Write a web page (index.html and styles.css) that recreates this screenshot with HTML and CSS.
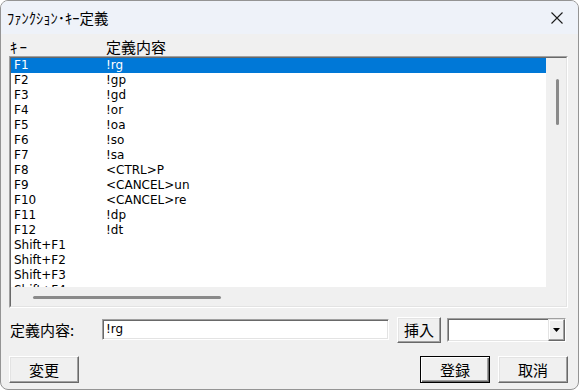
FILE: index.html
```html
<!DOCTYPE html>
<html lang="ja">
<head>
  <meta charset="UTF-8" />
  <title>ﾌｧﾝｸｼｮﾝ･ｷｰ定義</title>
  <link rel="stylesheet" href="styles.css">
</head>
<body>
  <div class="window">
    <div class="titlebar">
      <span class="title">ﾌｧﾝｸｼｮﾝ･ｷｰ定義</span>
      <div class="close">
        <svg width="12" height="12" viewBox="0 0 12 12">
          <path d="M0.5 0.5 L11.5 11.5 M11.5 0.5 L0.5 11.5" stroke="#1b1b1b" stroke-width="1.1" fill="none" />
        </svg>
      </div>
    </div>

    <div class="content">
      <div class="list-head">
        <span class="col-key">ｷｰ</span>
        <span class="col-def">定義内容</span>
      </div>

      <div class="listbox">
        <div class="list-inner">
          <div class="rows">
            <div class="row selected"><span class="key">F1</span><span>!rg</span></div>
            <div class="row"><span class="key">F2</span><span>!gp</span></div>
            <div class="row"><span class="key">F3</span><span>!gd</span></div>
            <div class="row"><span class="key">F4</span><span>!or</span></div>
            <div class="row"><span class="key">F5</span><span>!oa</span></div>
            <div class="row"><span class="key">F6</span><span>!so</span></div>
            <div class="row"><span class="key">F7</span><span>!sa</span></div>
            <div class="row"><span class="key">F8</span><span>&lt;CTRL&gt;P</span></div>
            <div class="row"><span class="key">F9</span><span>&lt;CANCEL&gt;un</span></div>
            <div class="row"><span class="key">F10</span><span>&lt;CANCEL&gt;re</span></div>
            <div class="row"><span class="key">F11</span><span>!dp</span></div>
            <div class="row"><span class="key">F12</span><span>!dt</span></div>
            <div class="row"><span class="key">Shift+F1</span><span></span></div>
            <div class="row"><span class="key">Shift+F2</span><span></span></div>
            <div class="row"><span class="key">Shift+F3</span><span></span></div>
            <div class="row"><span class="key">Shift+F4</span><span></span></div>
          </div>
          <div class="vscroll"><div class="vthumb"></div></div>
          <div class="hscroll"><div class="hthumb"></div></div>
          <div class="corner"></div>
        </div>
      </div>

      <div class="edit-row">
        <span class="edit-label">定義内容:</span>
        <div class="text-input">!rg</div>
        <button class="btn insert-btn">挿入</button>
        <div class="combo">
          <div class="combo-value"></div>
          <div class="combo-drop">
            <svg width="7" height="4" viewBox="0 0 7 4"><path d="M0 0 H7 L3.5 4 Z" fill="#000" /></svg>
          </div>
        </div>
      </div>

      <div class="button-row">
        <button class="btn">変更</button>
        <button class="btn default spacer">登録</button>
        <button class="btn">取消</button>
      </div>
    </div>
  </div>
</body>
</html>
```

FILE: styles.css
```css
/* dialog frame */
body {
  margin: 0;
  background: #fff;
  font-family: "DejaVu Sans", "Noto Sans CJK JP", sans-serif;
  font-size: 12px;
  color: #000;
}
.window {
  width: 579px;
  height: 390px;
  box-sizing: border-box;
  border: 1px solid #949494;
  border-radius: 8px;
  background: #f0f0f0;
  overflow: hidden;
}
.titlebar {
  height: 33px;
  background: #eef2f9;
  display: flex;
  align-items: center;
  padding-left: 6px;
}
.title {
  font-family: "Noto Sans CJK JP", sans-serif;
  font-size: 14.5px;
}
.close {
  margin-left: auto;
  width: 42px;
  height: 33px;
  display: flex;
  align-items: center;
  justify-content: center;
}
.content {
  padding: 0 10px 0 8px;
}

/* list */
.list-head {
  height: 19px;
  padding-top: 3px;
  display: flex;
  align-items: center;
  font-family: "Noto Sans CJK JP", sans-serif;
  font-size: 15px;
}
.col-key {
  width: 96px;
  padding-left: 1px;
  letter-spacing: 2px;
}
.listbox {
  height: 252px;
  box-sizing: border-box;
  border: 1px solid;
  border-color: #a0a0a0 #fff #fff #a0a0a0;
}
.list-inner {
  height: 100%;
  box-sizing: border-box;
  border: 1px solid;
  border-color: #696969 #e3e3e3 #e3e3e3 #696969;
  display: grid;
  grid-template-columns: 1fr 20px;
  grid-template-rows: 1fr 19px;
}
.rows {
  background: #fff;
  overflow: hidden;
}
.row {
  height: 15px;
  line-height: 15px;
  display: flex;
  white-space: nowrap;
}
.row .key {
  width: 92px;
  padding-left: 3px;
}
.row.selected {
  background: #0078d7;
  color: #fff;
}
.vscroll, .hscroll, .corner {
  background: #f0f0f0;
}
.vscroll {
  padding: 21px 0 0 10px;
}
.vthumb {
  width: 3px;
  height: 46px;
  background: #8a8a8a;
  border-radius: 2px;
}
.hscroll {
  padding: 9px 0 0 22px;
}
.hthumb {
  width: 188px;
  height: 3px;
  background: #8a8a8a;
  border-radius: 2px;
}

/* edit row */
.edit-row {
  margin-top: 8px;
  height: 27px;
  display: flex;
  align-items: center;
}
.edit-label {
  width: 92px;
  padding-left: 1px;
  font-family: "Noto Sans CJK JP", sans-serif;
  font-size: 15px;
}
.edit-label, .text-input {
  flex: none;
}
.text-input {
  width: 287px;
  height: 21px;
  box-sizing: border-box;
  background: #fff;
  border: 1px solid;
  border-color: #a0a0a0 #fff #fff #a0a0a0;
  box-shadow: inset 1px 1px #696969, inset -1px -1px #e3e3e3;
  padding-left: 3px;
  line-height: 19px;
}
.combo {
  margin-left: 6px;
  width: 119px;
  height: 24px;
  box-sizing: border-box;
  border: 1px solid;
  border-color: #a0a0a0 #fff #fff #a0a0a0;
  display: flex;
}
.combo-value {
  flex: 1;
  background: #fff;
  border: 1px solid;
  border-right: none;
  border-color: #696969 #e3e3e3 #e3e3e3 #696969;
}
.combo-drop {
  width: 17px;
  box-sizing: border-box;
  background: #f0f0f0;
  border: 1px solid;
  border-color: #e3e3e3 #696969 #696969 #e3e3e3;
  box-shadow: inset -1px -1px #a0a0a0, inset 1px 1px #fff;
  display: flex;
  align-items: center;
  justify-content: center;
}

/* buttons */
.btn {
  width: 70px;
  height: 27px;
  box-sizing: border-box;
  padding: 0;
  background: #f0f0f0;
  border: 1px solid;
  border-color: #fff #696969 #696969 #fff;
  box-shadow: inset -1px -1px #a0a0a0, inset 1px 1px #e3e3e3;
  font-family: "Noto Sans CJK JP", sans-serif;
  font-size: 15px;
  color: #000;
  display: flex;
  align-items: center;
  justify-content: center;
}
.btn.default {
  border-color: #000;
  box-shadow: inset 1px 1px #fff, inset -1px -1px #696969, inset -2px -2px #a0a0a0;
}
.insert-btn {
  width: 44px;
  height: 26px;
  margin-left: 8px;
}
.button-row {
  margin-top: 13px;
  display: flex;
  gap: 8px;
}
.spacer {
  margin-left: auto;
}
```
